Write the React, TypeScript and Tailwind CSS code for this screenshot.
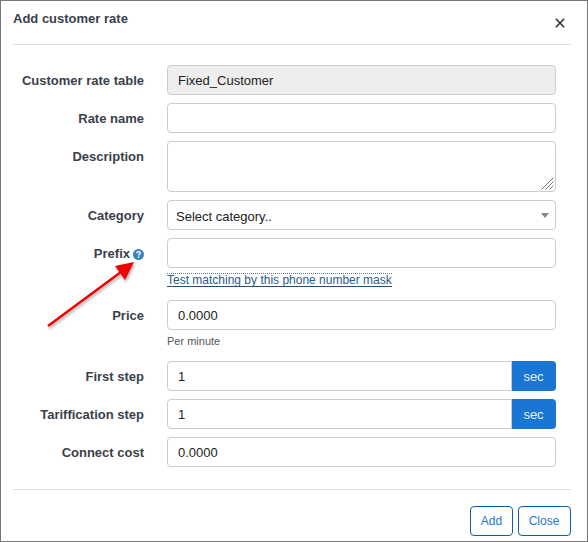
const labelCls = 'w-[131px] shrink-0 text-right text-[13px] font-bold leading-[18px] text-[#3a3f4b]';
const inputCls = 'h-[30px] w-full rounded-[4px] border border-[#ccc] bg-white px-[10px] text-[13px] text-[#222] outline-none';

const Row = ({ label, children, className = '' }: { label: React.ReactNode; children: React.ReactNode; className?: string }) => (
  <div className={`flex ${className}`}>
    <div className={`${labelCls} pt-[7px]`}>{label}</div>
    <div className="ml-[23px] w-[389px]">{children}</div>
  </div>
);

const SecInput = ({ value }: { value: string }) => (
  <div className="flex h-[30px]">
    <div className="flex flex-1 items-center rounded-l-[4px] border border-[#ccc] bg-white px-[10px] pt-[2px] text-[13px] text-[#222]">{value}</div>
    <div className="flex w-[44px] items-center justify-center rounded-r-[4px] bg-[#1976d2] pr-[1px] pt-[1px] text-[13px] text-[#e8f1fb]">sec</div>
  </div>
);

const App = () => {
  return (
    <div className="relative h-[542px] w-[588px] overflow-hidden border border-[#777] bg-white font-['Liberation_Sans',Arial,sans-serif]">
      <div className="ml-[12px] mr-[16px]">
        {/* Header */}
        <div className="relative h-[44px] border-b border-[#e0e0e0]">
          <div className="pt-[10px] text-[13px] font-bold leading-[16px] text-[#3a3f4b]">Add customer rate</div>
          <svg className="absolute right-[6px] top-[17px]" width="10" height="10" viewBox="0 0 10 10">
            <path d="M0.8 0.8L9.2 9.2M9.2 0.8L0.8 9.2" stroke="#2a3342" strokeWidth="1.6" />
          </svg>
        </div>

        {/* Form */}
        <div className="pt-[20px]">
          <Row label="Customer rate table">
            <div className="flex h-[30px] items-center rounded-[4px] border border-[#ccc] bg-[#eee] px-[10px] pt-[2px] text-[13px] text-[#222]">Fixed_Customer</div>
          </Row>
          <Row label="Rate name" className="mt-[8px]">
            <input className={inputCls} />
          </Row>
          <Row label="Description" className="mt-[8px]">
            <div className="relative h-[51px] rounded-[4px] border border-[#ccc] bg-white">
              <svg className="absolute bottom-[1px] right-[1px]" width="13" height="13" viewBox="0 0 13 13">
                <path d="M12.5 0.5L0.5 12.5M12.5 4.5L4.5 12.5M12.5 8.5L8.5 12.5" stroke="#777" strokeWidth="1" />
              </svg>
            </div>
          </Row>
          <Row label="Category" className="mt-[8px]">
            <div className="relative flex h-[30px] items-center rounded-[4px] border border-[#ccc] bg-white pl-[8px] pt-[4px] text-[13px] text-[#222]">
              Select category..
              <span className="absolute right-[6px] top-[12px] h-0 w-0 border-x-[4px] border-t-[5px] border-x-transparent border-t-[#888]" />
            </div>
          </Row>
          <Row
            label={
              <span className="inline-flex items-center gap-[3px]">
                Prefix
                <svg width="11" height="11" viewBox="0 0 11 11">
                  <circle cx="5.5" cy="5.5" r="5.5" fill="#3b82c4" />
                  <path d="M3.7 4.2C3.8 3.2 4.5 2.6 5.5 2.6C6.6 2.6 7.3 3.2 7.3 4.1C7.3 5.2 5.6 5.3 5.6 6.6" stroke="#fff" strokeWidth="1.4" fill="none" />
                  <rect x="4.8" y="7.4" width="1.5" height="1.4" fill="#fff" />
                </svg>
              </span>
            }
            className="mt-[8px]"
          >
            <input className={inputCls} />
            <div className="mt-[5px] h-[14px]">
              <span className="block w-fit border-t border-b border-dotted border-t-[#5a7fa3] border-b-[#1f4f7a] [border-bottom-style:solid] text-[12px] leading-[12px] text-[#2f5b85]">Test matching by this phone number mask</span>
            </div>
          </Row>
          <Row label="Price" className="mt-[13px]">
            <input className={inputCls} defaultValue="0.0000" />
            <div className="mt-[4px] text-[11px] leading-[14px] text-[#555]">Per minute</div>
          </Row>
          <Row label="First step" className="mt-[13px]">
            <SecInput value="1" />
          </Row>
          <Row label="Tariffication step" className="mt-[8px]">
            <SecInput value="1" />
          </Row>
          <Row label="Connect cost" className="mt-[8px]">
            <input className={inputCls} defaultValue="0.0000" />
          </Row>
        </div>

        {/* Footer */}
        <div className="mt-[22px] flex justify-end gap-[5px] border-t border-[#e0e0e0] pt-[16px]">
          <button className="h-[30px] w-[43px] rounded-[4px] border border-[#0d5ea8] bg-white text-[12px] text-[#1976d2]">Add</button>
          <button className="h-[30px] w-[53px] rounded-[4px] border border-[#0d5ea8] bg-white pr-[1px] text-[12px] text-[#1976d2]">Close</button>
        </div>
      </div>

      {/* Red annotation arrow */}
      <svg className="pointer-events-none absolute left-[40px] top-[255px]" width="100" height="80" viewBox="0 0 100 80">
        <defs>
          <filter id="arrow-shadow" x="-20%" y="-20%" width="150%" height="150%">
            <feDropShadow dx="1" dy="2" stdDeviation="1.5" floodColor="#000" floodOpacity="0.35" />
          </filter>
        </defs>
        <g filter="url(#arrow-shadow)">
          <path d="M7 70L80 16" stroke="#f00000" strokeWidth="2.4" />
          <path d="M93 6L84 24L74 10Z" fill="#f00000" />
        </g>
      </svg>
    </div>
  );
};

export default App;
